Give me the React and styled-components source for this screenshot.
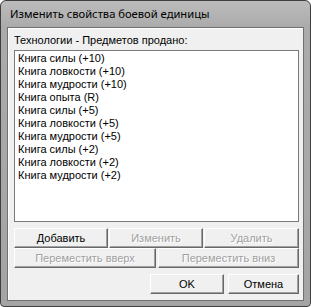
import React from "react";
import styled, { createGlobalStyle } from "styled-components";

const GlobalStyle = createGlobalStyle`
  html, body {
    margin: 0;
    padding: 0;
    background: #ffffff;
  }
  body {
    font-family: "Liberation Sans", Arial, sans-serif;
  }
`;

const Window = styled.div`
  box-sizing: border-box;
  width: 311px;
  height: 307px;
  display: flex;
  flex-direction: column;
  border: 1px solid #3f3f3f;
  border-radius: 6px 6px 4px 4px;
  background: linear-gradient(#bcbcbc, #ababab 26px, #a4a4a4);
  padding: 0 6px 5px 6px;
  overflow: hidden;
`;

const TitleBar = styled.div`
  height: 26px;
  display: flex;
  align-items: center;
  padding-left: 3px;
  padding-bottom: 1px;
  box-sizing: border-box;
  font-family: "Noto Sans", "Open Sans", sans-serif;
  font-size: 11.2px;
  color: #000;
`;

const Client = styled.div`
  flex: 1;
  display: flex;
  flex-direction: column;
  background: #f0f0f0;
  border: 1px solid #707070;
  box-shadow: inset 1px 1px 0 #ffffff;
  padding: 6px 4px 6px 6px;
  font-size: 11px;
`;

const Caption = styled.div`
  height: 13px;
  line-height: 13px;
  color: #000;
  margin-bottom: 3px;
`;

const ListBox = styled.ul`
  list-style: none;
  margin: 0;
  height: 172px;
  box-sizing: border-box;
  border: 1px solid #7a7a7a;
  background: #fff;
  padding: 1px 0 0 2px;
  overflow: hidden;
`;

const Item = styled.li`
  height: 13px;
  line-height: 13px;
  padding-left: 1px;
  color: #000;
  white-space: nowrap;
`;

const ButtonRow = styled.div`
  display: grid;
  grid-template-columns: ${(p) => p.$cols};
  column-gap: ${(p) => p.$gap}px;
  justify-content: ${(p) => p.$justify || "start"};
  margin-top: ${(p) => p.$top}px;
`;

const Button = styled.button`
  height: 20px;
  box-sizing: border-box;
  margin: 0;
  padding: 0;
  font-family: "Liberation Sans", Arial, sans-serif;
  font-size: 11px;
  background: #f0f0f0;
  border: 1px solid;
  border-color: #ffffff #696969 #696969 #ffffff;
  box-shadow: inset -1px -1px 0 #a0a0a0;
  color: ${(p) => (p.disabled ? "#a0a0a0" : "#000")};
  text-shadow: ${(p) => (p.disabled ? "1px 1px 0 #ffffff" : "none")};
`;

const items = [
  "Книга силы (+10)",
  "Книга ловкости (+10)",
  "Книга мудрости (+10)",
  "Книга опыта (R)",
  "Книга силы (+5)",
  "Книга ловкости (+5)",
  "Книга мудрости (+5)",
  "Книга силы (+2)",
  "Книга ловкости (+2)",
  "Книга мудрости (+2)",
];

export default function App() {
  return (
    <>
      <GlobalStyle />
      <Window>
        <TitleBar>Изменить свойства боевой единицы</TitleBar>
        <Client>
          <Caption>Технологии - Предметов продано:</Caption>
          <ListBox>
            {items.map((text, i) => (
              <Item key={i}>{text}</Item>
            ))}
          </ListBox>
          <ButtonRow $cols="94px 94px 95px" $gap={1} $top={6}>
            <Button>Добавить</Button>
            <Button disabled>Изменить</Button>
            <Button disabled>Удалить</Button>
          </ButtonRow>
          <ButtonRow $cols="142px 141px" $gap={2} $top={0}>
            <Button disabled>Переместить вверх</Button>
            <Button disabled>Переместить вниз</Button>
          </ButtonRow>
          <ButtonRow $cols="74px 71px" $gap={4} $top={6} $justify="end">
            <Button>OK</Button>
            <Button>Отмена</Button>
          </ButtonRow>
        </Client>
      </Window>
    </>
  );
}
